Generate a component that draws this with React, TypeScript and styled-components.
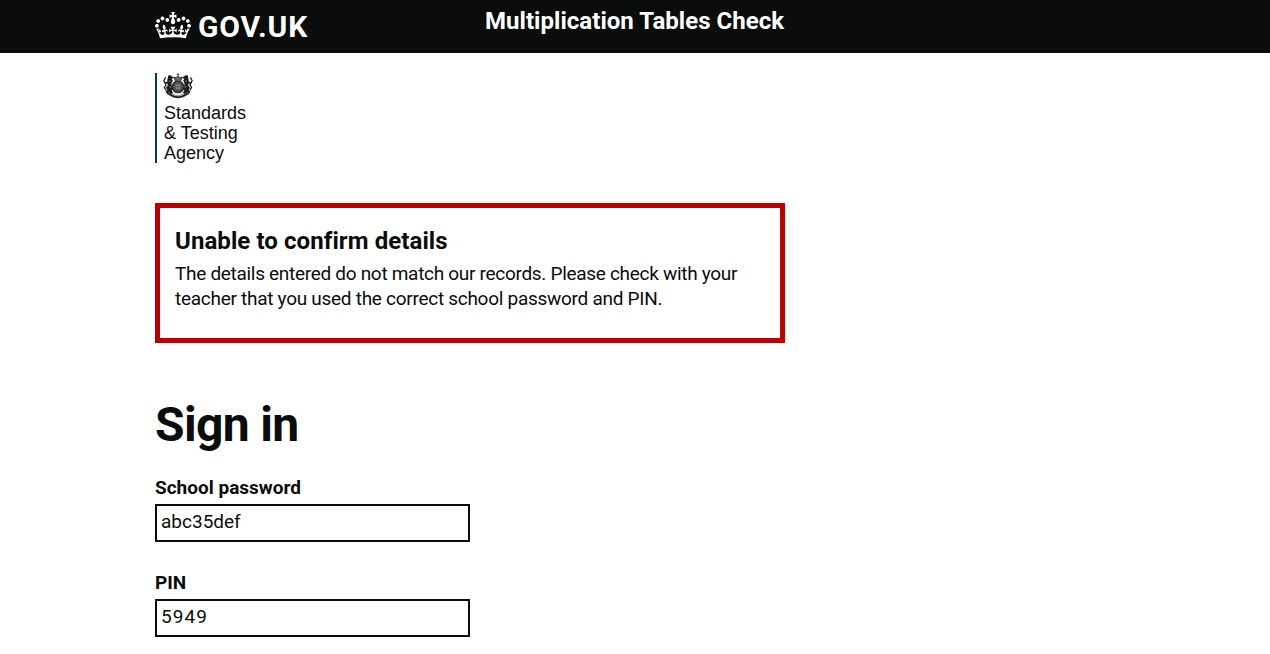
import React from "react";
import styled, { createGlobalStyle } from "styled-components";

const GlobalStyle = createGlobalStyle`
  * { box-sizing: border-box; }
  body { margin: 0; background: #fff; color: #0b0c0c; font-family: Roboto, Arial, sans-serif; overflow: hidden; }
`;

const Header = styled.header`
  background: #0b0c0c;
  height: 53px;
`;

const HeaderInner = styled.div`
  width: 960px;
  margin: 0 auto;
  display: grid;
  grid-template-columns: 330px 1fr;
  color: #fff;
`;

const LogoLink = styled.div`
  display: flex;
  align-items: flex-start;
  gap: 7px;
  padding-top: 12px;
`;

const LogoText = styled.span`
  font-size: 30px;
  line-height: 30px;
  font-weight: 700;
  letter-spacing: 0.9px;
  white-space: nowrap;
`;

const ServiceName = styled.div`
  padding-top: 6px;
  font-size: 24px;
  line-height: 30px;
  font-weight: 700;
  letter-spacing: 0.04px;
  white-space: nowrap;
`;

const Main = styled.main`
  width: 960px;
  margin: 0 auto;
  padding-top: 20px;
`;

const Agency = styled.div`
  height: 90px;
  border-left: 2px solid #003764;
  padding-left: 6px;
  display: flex;
  flex-direction: column;
`;

const AgencyName = styled.div`
  padding: 4px 0 0 1px;
  font-family: "Liberation Sans", Arial, sans-serif;
  font-size: 18px;
  line-height: 20px;
`;

const ErrorSummary = styled.section`
  width: 630px;
  height: 140px;
  margin-top: 40px;
  border: 5px solid #c00000;
  padding: 18px 15px;
`;

const ErrorTitle = styled.h2`
  margin: 0 0 5px;
  font-size: 24px;
  line-height: 30px;
  font-weight: 700;
  letter-spacing: 0.08px;
  white-space: nowrap;
`;

const ErrorLine = styled.span<{ $track: number }>`
  display: block;
  font-size: 19px;
  line-height: 25px;
  letter-spacing: ${(p) => p.$track}px;
  white-space: nowrap;
`;

const PageTitle = styled.h1`
  margin: 57px 0 0;
  font-size: 48px;
  line-height: 50px;
  font-weight: 700;
  letter-spacing: -0.65px;
`;

const Field = styled.div<{ $top: number }>`
  margin-top: ${(p) => p.$top}px;
  display: flex;
  flex-direction: column;
  align-items: flex-start;
`;

const Label = styled.label`
  font-size: 19px;
  line-height: 25px;
  font-weight: 700;
`;

const Input = styled.input<{ $track: number }>`
  margin-top: 4px;
  width: 315px;
  height: 38px;
  border: 2px solid #0b0c0c;
  border-radius: 0;
  outline: none;
  background: #fff;
  color: #0b0c0c;
  padding: 1px 4px 5px;
  font-family: inherit;
  font-size: 19px;
  line-height: 26px;
  letter-spacing: ${(p) => p.$track}px;
`;

const Crown = () => (
  <svg width="36" height="26.5" viewBox="0 0 132 97" fill="#fff" aria-hidden="true">
    <path
      fillRule="evenodd"
      d="M25 30.2c3.5 1.5 7.7-.2 9.1-3.7 1.5-3.6-.2-7.8-3.9-9.2-3.6-1.4-7.6.3-9.1 3.9-1.4 3.5.3 7.5 3.9 9zM9 39.5c3.6 1.5 7.8-.2 9.2-3.7 1.5-3.6-.2-7.8-3.9-9.1-3.6-1.5-7.6.2-9.1 3.8-1.4 3.5.3 7.5 3.8 9zM4.4 57.2c3.5 1.5 7.7-.2 9.1-3.8 1.5-3.6-.2-7.7-3.9-9.1-3.5-1.5-7.6.3-9.1 3.8-1.4 3.5.3 7.6 3.9 9.1zm38.3-21.4c3.5 1.5 7.7-.2 9.1-3.8 1.5-3.6-.2-7.7-3.9-9.1-3.6-1.5-7.6.3-9.1 3.8-1.3 3.6.4 7.7 3.9 9.1zm64.4-5.6c-3.6 1.5-7.8-.2-9.1-3.7-1.5-3.6.2-7.8 3.8-9.2 3.6-1.4 7.7.3 9.2 3.9 1.3 3.5-.4 7.5-3.9 9zm15.9 9.3c-3.6 1.5-7.7-.2-9.1-3.7-1.5-3.6.2-7.8 3.7-9.1 3.6-1.5 7.7.2 9.2 3.8 1.5 3.5-.3 7.5-3.8 9zm4.7 17.7c-3.6 1.5-7.8-.2-9.2-3.8-1.5-3.6.2-7.7 3.9-9.1 3.6-1.5 7.7.3 9.2 3.8 1.3 3.5-.4 7.6-3.9 9.1zM89.3 35.8c-3.6 1.5-7.8-.2-9.2-3.8-1.4-3.6.2-7.7 3.9-9.1 3.6-1.5 7.7.3 9.2 3.8 1.4 3.6-.3 7.7-3.9 9.1zM69.7 17.7l8.9 4.7V9.3l-8.9 2.8c-.2-.3-.5-.6-.9-.9L72.4 0H59.6l3.5 11.2c-.3.3-.6.5-.9.9l-8.8-2.8v13.1l8.8-4.7c.3.3.6.7.9.9l-5 15.4v.1c-.2.8-.4 1.6-.4 2.4 0 4.1 3.1 7.5 7 8.1h.2c.3 0 .7.1 1 .1.4 0 .7 0 1-.1h.2c4-.6 7.1-4.1 7.1-8.1 0-.8-.1-1.7-.4-2.4V34l-5.1-15.4c.4-.2.7-.6 1-.9zM66 92.8c16.9 0 32.8 1.1 47.1 3.2 4-16.9 8.9-26.7 14-33.5l-9.6-3.4c1 4.9 1.1 7.2 0 10.2-1.5-1.4-3-4.3-4.2-8.7L108.6 76c2.8-2 5-3.2 7.5-3.3-4.4 9.4-10 11.9-13.6 11.2-4.3-.8-6.3-4.6-5.6-7.9 1-4.7 5.7-5.9 8-.5 4.3-8.7-3-11.4-7.6-8.8 7.1-7.2 7.9-13.5 2.1-21.1-8 6.1-8.1 12.3-4.5 20.8-4.7-5.4-12.1-2.5-9.5 6.2 3.4-5.2 7.9-2 7.2 3.1-.6 4.3-6.4 7.8-13.5 7.2-10.3-.9-10.9-8-11.2-13.8 2.5-.5 7.1 1.8 11 7.3L80.2 60c-4.1 4.4-8 5.3-12.3 5.4 1.4-4.4 8-11.6 8-11.6H55.5s6.4 7.2 7.9 11.6c-4.2-.1-8-1-12.3-5.4l1.4 16.4c3.9-5.5 8.5-7.7 10.9-7.3-.3 5.8-.9 12.8-11.1 13.8-7.2.6-12.9-2.9-13.5-7.2-.7-5 3.8-8.3 7.1-3.1 2.7-8.7-4.6-11.6-9.4-6.2 3.7-8.5 3.6-14.7-4.6-20.8-5.8 7.6-5 13.9 2.2 21.1-4.7-2.6-11.9.1-7.7 8.8 2.3-5.5 7.1-4.2 8.1.5.7 3.3-1.3 7.1-5.7 7.9-3.5.7-9-1.8-13.5-11.2 2.5.1 4.7 1.3 7.5 3.3l-4.7-15.4c-1.2 4.4-2.7 7.2-4.3 8.7-1.1-3-.9-5.3 0-10.2l-9.5 3.4c5 6.9 9.9 16.7 14 33.5 14.8-2.1 30.8-3.2 47.7-3.2z"
    />
  </svg>
);

const Crest = () => (
  <svg width="30" height="26" viewBox="0 0 30 26" fill="none" stroke="#1c1c1c" aria-hidden="true">
    <circle cx="15" cy="13.8" r="5.6" fill="#555" stroke="#333" strokeWidth="1.8" />
    <circle cx="15" cy="13.8" r="3.1" fill="#999" stroke="#555" strokeWidth="1" />
    <path d="M15 10.5v6.6M11.8 13.8h6.4" stroke="#444" strokeWidth=".8" />
    <path d="M12 7.2l-.9-3 2 .6L15 3.4l1.9 1.4 2-.6-.9 3z" fill="#777" stroke="#444" strokeWidth="1.1" />
    <path d="M15 .2v3M13.6 1.4h2.8" stroke="#444" strokeWidth=".9" />
    <g fill="#1c1c1c" stroke="none">
      <path d="M5.2 2.6l2.4-.4 1.6 1.6 1.6.2-.8 1.4-1.4.4 1.2 2-1.4 2.6.6 3.4 1 2.6-1.4 1.2 1.6 2.4-1.8 1-2.6-1.6-2.6.8-.6-1.6 1.8-1.6L3 14.8l1.8-2.4-.4-1.8-2.2.2-.6-1.4 2.6-.8.4-2.6z" />
      <path d="M24.8 2.6l-2.4-.4-1.6 1.6-1.6.2.8 1.4 1.4.4-1.2 2 1.4 2.6-.6 3.4-1 2.6 1.4 1.2-1.6 2.4 1.8 1 2.6-1.6 2.6.8.6-1.6-1.8-1.6 1.4-2.2-1.8-2.4.4-1.8 2.2.2.6-1.4-2.6-.8-.4-2.6z" />
    </g>
    <g strokeWidth="1.3" strokeLinecap="round">
      <path d="M3 17l-1.6-2.4L3 12 .9 7.8l1.4-3M27 17l1.6-2.4L27 12l2.1-4.2-1.4-3" />
    </g>
    <path d="M6.6 13.4l1.6 1.2M6.2 8l1.4.4M23.4 13.4l-1.6 1.2M23.8 8l-1.4.4" stroke="#bbb" strokeWidth=".9" />
    <path d="M4 20.6c2-.6 3.2 1.4 5.2 2 2.2 1.8 3.6 1 5.8 1.6 2.2-.6 3.6.2 5.8-1.6 2-.6 3.2-2.6 5.2-2" stroke="#2a2a2a" strokeWidth="2.2" />
    <path d="M10 21.2q5 2.8 10 0" stroke="#999" strokeWidth="1.1" />
  </svg>
);

export default function App() {
  return (
    <>
      <GlobalStyle />
      <Header>
        <HeaderInner>
          <LogoLink>
            <Crown />
            <LogoText>GOV.UK</LogoText>
          </LogoLink>
          <ServiceName>Multiplication Tables Check</ServiceName>
        </HeaderInner>
      </Header>
      <Main>
        <Agency>
          <Crest />
          <AgencyName>
            Standards
            <br />
            &amp; Testing
            <br />
            Agency
          </AgencyName>
        </Agency>
        <ErrorSummary>
          <ErrorTitle>Unable to confirm details</ErrorTitle>
          <ErrorLine $track={-0.3}>The details entered do not match our records. Please check with your</ErrorLine>
          <ErrorLine $track={-0.28}>teacher that you used the correct school password and PIN.</ErrorLine>
        </ErrorSummary>
        <PageTitle>Sign in</PageTitle>
        <Field $top={25}>
          <Label htmlFor="password">School password</Label>
          <Input id="password" defaultValue="abc35def" $track={0} />
        </Field>
        <Field $top={28}>
          <Label htmlFor="pin">PIN</Label>
          <Input id="pin" defaultValue="5949" $track={1.1} />
        </Field>
      </Main>
    </>
  );
}
